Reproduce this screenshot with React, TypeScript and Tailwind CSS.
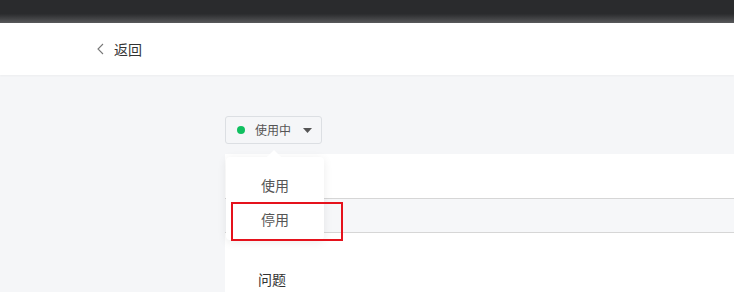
const App = () => {
  return (
    <div
      className="relative h-[292px] w-[734px] overflow-hidden bg-[#f5f6f8] text-[#333]"
      style={{ fontFamily: '"Noto Sans CJK SC", "Noto Sans", sans-serif' }}
    >
      {/* top window bar */}
      <div className="h-[23px] bg-gradient-to-b from-[#2a2b2d] from-60% to-[#58595b]" />

      {/* header */}
      <div className="flex h-[52px] items-center bg-white pl-[96px] shadow-[0_1px_2px_rgba(0,0,0,0.04)]">
        <svg width="9" height="12" viewBox="0 0 9 12" className="mr-[9px]">
          <path d="M7 1 L2 6 L7 11" fill="none" stroke="#777" strokeWidth="1.1" />
        </svg>
        <span className="text-[14px] leading-none">返回</span>
      </div>

      {/* content */}
      <div className="pl-[225px] pt-[41px]">
        <button className="flex h-[28px] w-[97px] items-center rounded-[3px] border border-[#dcdfe3] bg-[#f5f6f8] pl-[11px] text-[12px] text-[#555]">
          <span className="h-[8px] w-[8px] rounded-full bg-[#10c060]" />
          <span className="ml-[10px] leading-none">使用中</span>
          <svg width="9" height="5" viewBox="0 0 9 5" className="ml-[12px]">
            <path d="M0 0 H9 L4.5 5 Z" fill="#555" />
          </svg>
        </button>

        <div className="mt-[10px] h-[200px] bg-white">
          <div className="h-[44px]" />
          <div className="h-[35px] border-y border-[#d6d6d6] bg-[#f6f7f9]" />
          <div className="pl-[33px] pt-[39px] text-[14px] leading-none">问题</div>
        </div>
      </div>

      {/* dropdown menu */}
      <div className="absolute left-[226px] top-[157px] w-[98px] rounded-[4px] bg-white shadow-[0_2px_10px_rgba(0,0,0,0.08)]">
        <div className="absolute -top-[5px] left-[43px] h-[10px] w-[10px] rotate-45 bg-white" />
        <div className="relative flex flex-col items-center pb-[12px] pt-[19px] text-[14px] text-[#555]">
          <div className="flex h-[18px] items-center leading-none">使用</div>
          <div className="mt-[16px] flex h-[18px] items-center leading-none">停用</div>
        </div>
      </div>

      {/* highlight */}
      <div className="absolute left-[231px] top-[202px] h-[39px] w-[112px] border-2 border-[#e5121c]" />
    </div>
  );
};

export default App;
